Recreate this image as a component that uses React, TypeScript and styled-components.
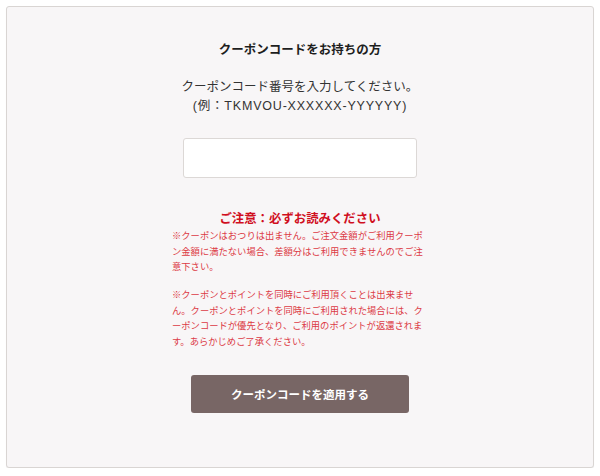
import React from "react";
import styled, { createGlobalStyle } from "styled-components";

const GlobalStyle = createGlobalStyle`
  html, body { margin: 0; padding: 0; background: #ffffff; }
  body {
    font-family: "Liberation Sans", "Noto Sans CJK JP", sans-serif;
    color: #222222;
  }
  * { box-sizing: border-box; }
`;

const Panel = styled.section`
  margin: 6px 6px 0 6px;
  width: 588px;
  height: 462px;
  background: #f8f6f7;
  border: 1px solid #d9d5d3;
  border-radius: 3px;
  box-shadow: 0 1px 1px rgba(0, 0, 0, 0.06);
  display: flex;
  flex-direction: column;
  align-items: center;
  padding-top: 33px;
`;

const Title = styled.h2`
  margin: 0;
  font-size: 12.5px;
  line-height: 20px;
  font-weight: 700;
  color: #1e1e1e;
`;

const Instructions = styled.p`
  margin: 17.5px 0 0;
  font-size: 12.5px;
  line-height: 19px;
  text-align: center;
  color: #333333;
`;

const Example = styled.span`
  letter-spacing: 0.8px;
`;

const CodeInput = styled.input`
  margin-top: 22.5px;
  width: 234px;
  height: 40px;
  background: #ffffff;
  border: 1px solid #dcd8d6;
  border-radius: 3px;
  outline: none;
  font-size: 13px;
  padding: 0 8px;
`;

const NoticeHeading = styled.h3`
  margin: 32px 0 0;
  font-size: 12.4px;
  line-height: 18px;
  font-weight: 700;
  color: #d00f1e;
`;

const NoticeBlock = styled.div`
  width: 256px;
  margin-top: 1px;
  display: flex;
  flex-direction: column;
  gap: 12.5px;
`;

const NoticeText = styled.p`
  margin: 0;
  font-size: 9.3px;
  line-height: 15.5px;
  color: #dc3a45;
  text-align: left;
`;

const ApplyButton = styled.button`
  margin-top: 25px;
  width: 218px;
  height: 38px;
  background: #786665;
  border: none;
  border-radius: 3px;
  color: #ffffff;
  font-family: "Liberation Sans", "Noto Sans CJK JP", sans-serif;
  font-size: 11.5px;
  font-weight: 700;
  cursor: pointer;
`;

export default function App() {
  return (
    <>
      <GlobalStyle />
      <Panel>
        <Title>クーポンコードをお持ちの方</Title>
        <Instructions>
          クーポンコード番号を入力してください。
          <br />
          <Example>(例：TKMVOU-XXXXXX-YYYYYY)</Example>
        </Instructions>
        <CodeInput type="text" aria-label="クーポンコード" />
        <NoticeHeading>ご注意：必ずお読みください</NoticeHeading>
        <NoticeBlock>
          <NoticeText>
            ※クーポンはおつりは出ません。ご注文金額がご利用クーポン金額に満たない場合、差額分はご利用できませんのでご注意下さい。
          </NoticeText>
          <NoticeText>
            ※クーポンとポイントを同時にご利用頂くことは出来ません。クーポンとポイントを同時にご利用された場合には、クーポンコードが優先となり、ご利用のポイントが返還されます。あらかじめご了承ください。
          </NoticeText>
        </NoticeBlock>
        <ApplyButton type="button">クーポンコードを適用する</ApplyButton>
      </Panel>
    </>
  );
}
